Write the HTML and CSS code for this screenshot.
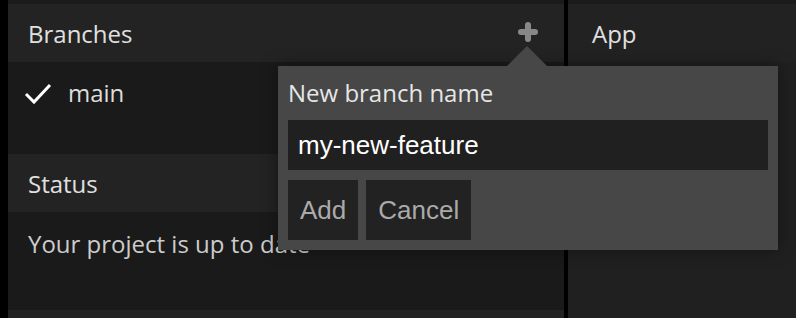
FILE: index.html
```html
<!DOCTYPE html>
<html lang="en">
<head>
	<meta charset="UTF-8">
	<title>Branches</title>
	<link rel="stylesheet" href="styles.css">
</head>
<body>
	<div class="app">
		<div class="edge"></div>

		<div class="panel left-panel">
			<div class="panel-header">
				<span>Branches</span>
				<svg class="add-icon" width="20" height="20" viewBox="0 0 20 20">
					<path d="M10 3 V17 M3 10 H17" stroke="#888" stroke-width="6" stroke-linecap="round"/>
				</svg>
			</div>
			<div class="panel-body branch-list">
				<div class="branch current">
					<svg class="check" width="28" height="22" viewBox="0 0 28 22">
						<polyline points="2,11 10,19 26,2" fill="none" stroke="#fff" stroke-width="3"/>
					</svg>
					<span>main</span>
				</div>
			</div>

			<div class="panel-header">
				<span>Status</span>
			</div>
			<div class="panel-body status-body">
				Your project is up to date
			</div>

			<div class="panel-header"></div>
		</div>

		<div class="divider"></div>

		<div class="panel right-panel">
			<div class="panel-header app-header">
				<span>App</span>
			</div>
		</div>

		<!-- popover for the + button -->
		<div class="popover">
			<div class="popover-arrow"></div>
			<label for="branchName">New branch name</label>
			<input type="text" class="branch-input" id="branchName" value="my-new-feature">
			<div class="popover-buttons">
				<button class="btn">Add</button>
				<button class="btn">Cancel</button>
			</div>
		</div>
	</div>
</body>
</html>
```

FILE: styles.css
```css
body {
	margin: 0;
	background-color: #1b1b1b;
	font-family: 'Open Sans', sans-serif;
	font-size: 24px;
	color: #ddd;
}

.app {
	position: relative;
	display: flex;
	height: 318px;
	overflow: hidden;
}

.edge {
	width: 8px;
	background-color: #000;
}

.divider {
	width: 4px;
	background-color: #000;
}

.panel {
	padding-top: 4px;
	background-color: #1b1b1b;
}

.left-panel {
	width: 556px;
}

.right-panel {
	flex: 1;
	background-color: #202020;
	padding-top: 4px;
	box-shadow: inset 0 4px 0 #1b1b1b;
}

.panel-header {
	display: flex;
	align-items: center;
	justify-content: space-between;
	height: 58px;
	padding: 0 26px 0 20px;
	background-color: #232323;
	color: #e0e0e0;
}

.app-header {
	padding-left: 24px;
	background-color: #222;
}

.add-icon {
	margin-top: -2px;
}

.panel-body {
	background-color: #1a1a1a;
	color: #ccc;
}

.branch-list {
	height: 78px;
	padding-top: 14px;
}

.branch {
	display: flex;
	align-items: center;
	height: 33px;
	padding-left: 16px;
	color: #ddd;
}

.check {
	margin-right: 16px;
	margin-top: 2px;
}

.status-body {
	height: 83px;
	padding: 15px 0 0 20px;
	line-height: 33px;
}

.popover {
	position: absolute;
	left: 278px;
	top: 66px;
	width: 480px;
	padding: 10px;
	background-color: #474747;
	box-shadow: 0 0 16px rgba(0, 0, 0, 0.4);
}

.popover-arrow {
	position: absolute;
	top: -20px;
	left: 229px;
	width: 0;
	height: 0;
	border-left: 20px solid transparent;
	border-right: 20px solid transparent;
	border-bottom: 20px solid #474747;
}

.popover label {
	display: block;
	line-height: 34px;
	margin-bottom: 10px;
	color: #e6e6e6;
}

.branch-input {
	display: block;
	box-sizing: border-box;
	width: 480px;
	height: 50px;
	padding: 0 10px;
	border: none;
	outline: none;
	background-color: #202020;
	color: #fff;
	font-family: 'Liberation Sans', Arial, sans-serif;
	font-size: 26px;
}

.popover-buttons {
	display: flex;
	gap: 8px;
	margin-top: 10px;
}

.btn {
	height: 60px;
	padding: 0 12px;
	border: none;
	background-color: #222;
	color: #aaa;
	font-family: 'Liberation Sans', Arial, sans-serif;
	font-size: 26px;
	cursor: pointer;
}
```
